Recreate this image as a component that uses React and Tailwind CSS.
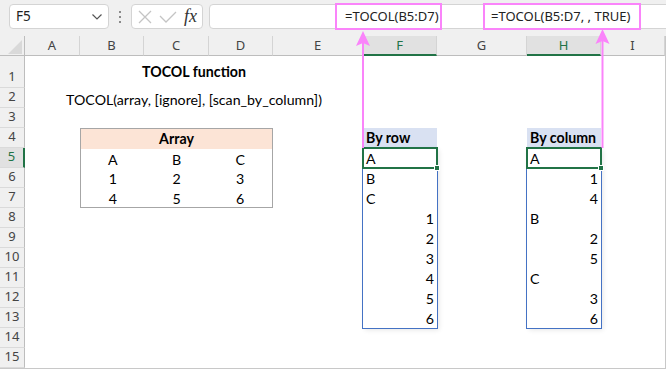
import React from 'react';

const rowStarts = ['row-start-2','row-start-3','row-start-4','row-start-5','row-start-6','row-start-7','row-start-8','row-start-9','row-start-10','row-start-11','row-start-12','row-start-13','row-start-14','row-start-15','row-start-16'];
const cols = ['A','B','C','D','E','F','G','H','I'];
const selCols = ['F','H'];

function SpillCol({ colClass, title, values }) {
  return (
    <>
      <div className={`${colClass} row-start-5 bg-[#d9e1f2] font-bold flex items-end pl-[3px] pb-[1px] leading-none h-[20px]`}>
        <span className="pb-[2px]">{title}</span>
      </div>
      <div className={`${colClass} row-start-6 row-span-9 flex flex-col outline outline-[#4472c4] shadow-[2px_2px_5px_rgba(0,0,0,0.10)]`}>
        {values.map((v, i) => (
          <div key={i} className={`relative h-[20px] flex items-end px-[3px] pb-[2px] leading-none ${typeof v === 'number' ? 'justify-end' : 'justify-start'}`}>
            <span>{v}</span>
            {i === 0 && (
              <>
                <div className="absolute -inset-px border-2 border-[#217346] pointer-events-none"></div>
                <div className="absolute -right-[3px] -bottom-[3px] w-[6px] h-[6px] bg-[#217346] border border-white"></div>
              </>
            )}
          </div>
        ))}
      </div>
    </>
  );
}

export default function App() {
  return (
    <div className="relative w-[666px] h-[369px] overflow-hidden bg-[#f0f0f0] font-['Noto_Sans',sans-serif] text-[#333]">
      {/* Toolbar */}
      <div className="h-[36px] flex items-start pt-[4px] pl-[9px]">
        <div className="w-[100px] h-[25px] bg-white border border-[#d4d4d4] rounded-[4px] flex items-center justify-between pl-[6px] pr-[6px]">
          <span className="text-[13.5px] text-[#222]">F5</span>
          <svg width="10" height="6" viewBox="0 0 10 6"><path d="M0.5 0.5 L5 5 L9.5 0.5" fill="none" stroke="#555" strokeWidth="1.2" /></svg>
        </div>
        <div className="w-[22px] h-[25px] flex flex-col items-center justify-center gap-[3px]">
          <div className="w-[2px] h-[2px] bg-[#8a8a8a]"></div>
          <div className="w-[2px] h-[2px] bg-[#8a8a8a]"></div>
          <div className="w-[2px] h-[2px] bg-[#8a8a8a]"></div>
        </div>
        <div className="w-[72px] h-[25px] bg-white border border-[#d4d4d4] rounded-[4px] flex items-center pl-[5px]">
          <svg width="14" height="14" viewBox="0 0 14 14" className="ml-[1px]"><path d="M1 1 L13 13 M13 1 L1 13" stroke="#c4c4c4" strokeWidth="1.3" fill="none" /></svg>
          <svg width="18" height="12" viewBox="0 0 18 12" className="ml-[7px]"><path d="M1 5 L7 11 L17 1" stroke="#c4c4c4" strokeWidth="1.3" fill="none" /></svg>
          <span className="ml-[7px] font-['Liberation_Serif',serif] italic text-[18px] leading-none text-[#333] -mt-[2px]">fx</span>
        </div>
        <div className="relative ml-[6px] flex-1 h-[25px] bg-white border border-[#d4d4d4] rounded-[4px] -mr-[6px]">
          <div className="absolute left-[125px] -top-[2px] w-[107px] h-[27px] border-2 border-[#fa84fa] flex items-center pl-[8px] whitespace-nowrap text-[13px] text-[#222]">=TOCOL(B5:D7)</div>
          <div className="absolute left-[273px] -top-[2px] w-[158px] h-[27px] border-2 border-[#fa84fa] flex items-center pl-[6px] whitespace-nowrap text-[13px] text-[#222]">=TOCOL(B5:D7, , TRUE)</div>
        </div>
      </div>

      {/* Sheet */}
      <div className="grid grid-cols-[25px_55px_64px_65px_64px_90px_74px_90px_74px_64px] grid-rows-[20px_32px_repeat(14,20px)] w-[666px] border-r border-b border-[#c8c8c8] bg-white text-[14.2px] text-black font-['Lato',sans-serif]">
        {/* corner */}
        <div className="col-start-1 row-start-1 bg-[#f0f0f0] border-r border-b border-[#bdbdbd] relative">
          <svg width="25" height="20" viewBox="0 0 25 20" className="absolute left-0 top-0"><polygon points="22,4 22,18 8,18" fill="#d9d9d9" /></svg>
        </div>
        {cols.map((c) => {
          const sel = selCols.includes(c);
          return (
            <div key={c} className={`row-start-1 flex items-center justify-center text-[13px] font-['Noto_Sans',sans-serif] border-r ${sel ? 'bg-[#e1e1e1] text-[#217346] border-b-2 border-b-[#217346] border-r-[#d4d4d4]' : 'bg-[#f0f0f0] text-[#444] border-b border-b-[#bdbdbd] border-r-[#d4d4d4]'}`}>
              <span className={sel ? 'mt-[2px]' : ''}>{c}</span>
            </div>
          );
        })}
        {/* row headers */}
        {rowStarts.map((rs, i) => {
          const sel = i === 4;
          return (
            <div key={rs} className={`col-start-1 ${rs} flex items-end justify-center pb-[1px] text-[13px] font-['Noto_Sans',sans-serif] border-b border-b-[#dadada] ${sel ? 'bg-[#e1e1e1] text-[#217346] border-r-2 border-r-[#217346]' : 'bg-[#f0f0f0] text-[#444] border-r border-r-[#bdbdbd]'}`}>
              {i + 1}
            </div>
          );
        })}

        {/* Title */}
        <div className="col-start-2 col-span-5 row-start-2 flex items-center justify-center pt-[1px] leading-none font-bold">TOCOL function</div>
        <div className="col-start-2 col-span-5 row-start-3 flex items-end justify-center pb-[1px] leading-none">TOCOL(array, [ignore], [scan_by_column])</div>

        {/* Array table */}
        <div className="col-start-3 col-span-3 row-start-5 row-span-4 border border-[#a6a6a6] grid grid-cols-3 grid-rows-4 leading-none">
          <div className="col-span-3 bg-[#fce4d6] font-bold flex items-end justify-center pb-[2px]">Array</div>
          {['A','B','C','1','2','3','4','5','6'].map((v, i) => (
            <div key={i} className="flex items-end justify-center pb-[1px]">{v}</div>
          ))}
        </div>

        <SpillCol colClass="col-start-7" title="By row" values={['A','B','C',1,2,3,4,5,6]} />
        <SpillCol colClass="col-start-9" title="By column" values={['A',1,4,'B',2,5,'C',3,6]} />
      </div>

      {/* Arrows */}
      <svg width="666" height="369" viewBox="0 0 666 369" className="absolute left-0 top-0 pointer-events-none">
        <line x1="363" y1="42" x2="363" y2="148" stroke="#fa84fa" strokeWidth="2" />
        <polygon points="363,31 370,46 363,43 356,46" fill="#fa84fa" />
        <line x1="602.5" y1="40" x2="602.5" y2="148" stroke="#fa84fa" strokeWidth="2" />
        <polygon points="602.5,29 609.5,44 602.5,41 595.5,44" fill="#fa84fa" />
      </svg>
    </div>
  );
}
